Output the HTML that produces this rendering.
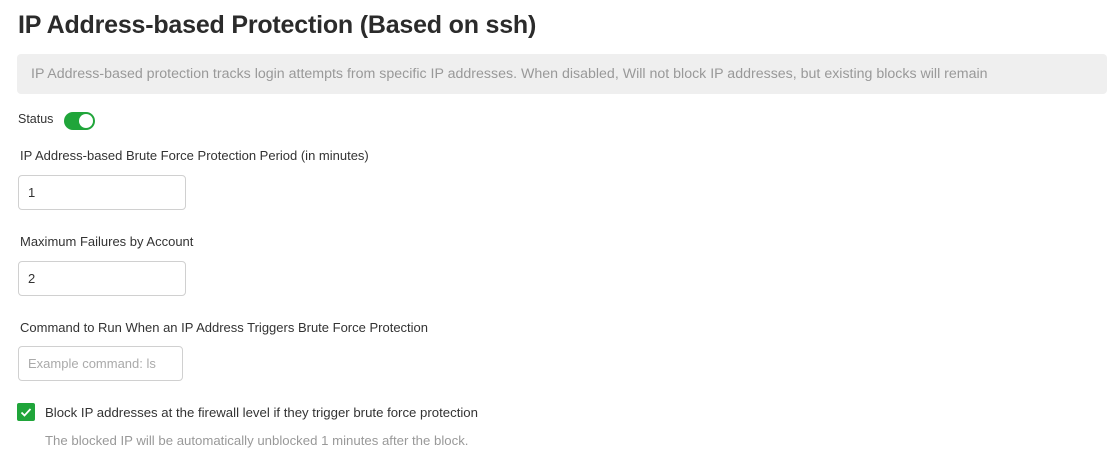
<!DOCTYPE html>
<html><head><meta charset="utf-8"><style>
body{margin:0;width:1107px;height:465px;background:#fff;font-family:"Liberation Sans",sans-serif;position:relative;overflow:hidden;color:#333}
.a{position:absolute;white-space:nowrap}
.inp{position:absolute;border:1px solid #d0d0d0;border-radius:4px;box-sizing:border-box;font-size:13px;padding-left:9px;display:flex;align-items:center}
</style></head><body>
<div class="a" style="left:18px;top:11px;font-size:25px;font-weight:bold;color:#2b2b2b;letter-spacing:-0.2px">IP Address-based Protection (Based on ssh)</div>
<div class="a" style="left:17px;top:54px;width:1090px;height:40px;background:#efefef;border-radius:4px"></div>
<div class="a" style="left:31px;top:66px;font-size:14.2px;color:#999">IP Address-based protection tracks login attempts from specific IP addresses. When disabled, Will not block IP addresses, but existing blocks will remain</div>
<div class="a" style="left:18px;top:112px;font-size:12.5px;color:#333">Status</div>
<div class="a" style="left:64px;top:112px;width:31px;height:18px;background:#20a53a;border-radius:9px"><div style="position:absolute;right:2px;top:2px;width:14px;height:14px;border-radius:50%;background:#fff"></div></div>
<div class="a" style="left:20px;top:148px;font-size:13px">IP Address-based Brute Force Protection Period (in minutes)</div>
<div class="inp" style="left:18px;top:175px;width:168px;height:35px">1</div>
<div class="a" style="left:20px;top:234px;font-size:13px">Maximum Failures by Account</div>
<div class="inp" style="left:18px;top:261px;width:168px;height:35px">2</div>
<div class="a" style="left:20px;top:320px;font-size:13px">Command to Run When an IP Address Triggers Brute Force Protection</div>
<div class="inp" style="left:18px;top:346px;width:165px;height:35px;color:#aaa">Example command: ls</div>
<div class="a" style="left:17px;top:403px;width:18px;height:18px;background:#20a53a;border-radius:2px"><svg width="18" height="18" viewBox="0 0 18 18"><path d="M4.5 9.5l3 3 6-6.5" stroke="#fff" stroke-width="1.8" fill="none"/></svg></div>
<div class="a" style="left:45px;top:405px;font-size:13.2px">Block IP addresses at the firewall level if they trigger brute force protection</div>
<div class="a" style="left:45px;top:433px;font-size:13.2px;color:#999">The blocked IP will be automatically unblocked 1 minutes after the block.</div>
</body></html>
